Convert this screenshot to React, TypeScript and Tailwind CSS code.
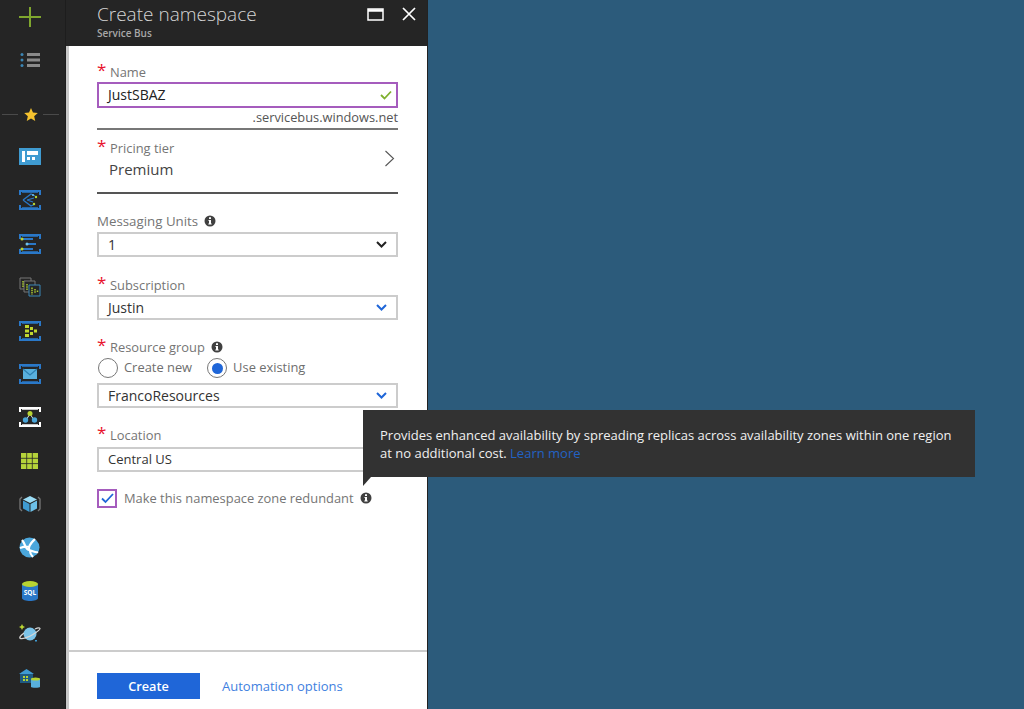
import { ReactNode } from "react"

const font = "font-['Open_Sans','Noto_Sans',sans-serif]"

function Bracket({ color, children }: { color: string; children: ReactNode }) {
  return (
    <svg width="22" height="20" viewBox="0 0 22 20" fill="none">
      <path d="M1 5V1H21V5M1 15V19H21V15" stroke={color} strokeWidth="2" />
      <path d="M3 2H19M3 18H19" stroke={color} strokeWidth="1.5" />
      {children}
    </svg>
  )
}

const railIcons: ReactNode[] = [
  <svg key="dash" width="22" height="17" viewBox="0 0 22 17">
    <rect width="22" height="17" fill="#3f9bd1" />
    <path d="M3 3h3v11H3zM8 3h11v4H8zM8 9h3v3H8zM13 9h3v3h-3z" fill="#fff" />
  </svg>,
  <Bracket key="bus" color="#2a78c8">
    <path d="M4 10 L12 4 L16 6 M4 10 L12 16 L16 14 M8 10 L15 8 M8 10 L14 12" stroke="#2a78c8" strokeWidth="1.300" />
    <circle cx="17" cy="7" r="1.200" fill="#b8d432" />
    <circle cx="15" cy="14" r="1.200" fill="#b8d432" />
    <circle cx="14" cy="5" r="1" fill="#6fc0e8" />
  </Bracket>,
  <Bracket key="lines" color="#2a78c8">
    <path d="M4 5H14M7 10H17M4 15H14" stroke="#2a78c8" strokeWidth="2" />
    <circle cx="3" cy="5" r="1.500" fill="#b8d432" />
    <circle cx="8" cy="10" r="1.500" fill="#6fc0e8" />
    <circle cx="3" cy="15" r="1.500" fill="#b8d432" />
  </Bracket>,
  <svg key="stack" width="22" height="20" viewBox="0 0 22 20" fill="none">
    <path d="M1 1h11v11H1z" stroke="#777" />
    <path d="M5 4h11v11H5z" stroke="#777" fill="#252525" />
    <path d="M10 8h11v11H10z" stroke="#3a87b8" fill="#252525" />
    <path d="M4 4v6M8 7v6M13 10.500v7M16 12v4M18.500 13.500v1.500" stroke="#a8c832" strokeWidth="1.500" strokeDasharray="1.500 .7" />
  </svg>,
  <Bracket key="tree" color="#2a78c8">
    <path d="M6 4h4v3H6zM6 8.500h4v3H6zM6 13h4v3H6zM11 6h3v3h-3zM11 11h3v3h-3zM15 8.500h3v3h-3z" fill="#c2d82e" />
  </Bracket>,
  <Bracket key="mail" color="#2a78c8">
    <path d="M4 5H18V15H4Z" fill="#58b0de" />
    <path d="M4 5L11 11L18 5" stroke="#2d7fb0" strokeWidth="1.200" fill="none" />
  </Bracket>,
  <Bracket key="relay" color="#ffffff">
    <path d="M11 7L7 13M11 7L15 13" stroke="#cfe0e8" strokeWidth="1" />
    <circle cx="11" cy="6.500" r="2.500" fill="#b8d432" />
    <circle cx="6.500" cy="13" r="2.700" fill="#4aa5d8" />
    <circle cx="15.500" cy="13" r="2.700" fill="#4aa5d8" />
  </Bracket>,
  <svg key="table" width="17" height="16" viewBox="0 0 17 16">
    <rect width="17" height="16" fill="#b5d33a" />
    <path d="M5.700 0V16M11.300 0V16M0 5.300H17M0 10.600H17" stroke="#252525" strokeWidth="0.800" />
  </svg>,
  <svg key="cube" width="22" height="18" viewBox="0 0 22 18" fill="none">
    <path d="M3 2L1 4V14L3 16M19 2L21 4V14L19 16" stroke="#777" strokeWidth="1.300" />
    <path d="M11 1L18 4.500L11 8L4 4.500Z" fill="#9bdcf5" />
    <path d="M4 5.500L10.500 9V17L4 13.500Z" fill="#3f9bd1" />
    <path d="M18 5.500L11.500 9V17L18 13.500Z" fill="#6cc0e8" />
  </svg>,
  <svg key="globe" width="21" height="21" viewBox="0 0 21 21" fill="none">
    <circle cx="10.500" cy="10.500" r="10" fill="#4ba7dc" />
    <path d="M3 3C7 8 6 12 10 13C14 14 17 16 19 15M16 2C13 5 9 8 10 13M1 11C4 10 7 9 9 10M11 14C11 16 12 18 14 20" stroke="#fff" strokeWidth="2.200" />
  </svg>,
  <svg key="sql" width="16" height="20" viewBox="0 0 16 20">
    <path d="M0 3V17C0 19 4 20 8 20C12 20 16 19 16 17V3Z" fill="#2a78c8" />
    <ellipse cx="8" cy="3" rx="8" ry="3" fill="#b8d432" />
    <text x="8" y="14" fontSize="6.500" fontWeight="700" fill="#fff" textAnchor="middle" fontFamily="Open Sans">SQL</text>
  </svg>,
  <svg key="cosmos" width="22" height="20" viewBox="0 0 22 20" fill="none">
    <circle cx="11" cy="10" r="6.500" fill="#7cc4ea" />
    <path d="M5 9C1 12 0 14 1.500 14.500C4 15 10 13 14 10.500C18 8 21.500 5.500 21 4.500C20.500 3.500 18 4 16 5" stroke="#d5d5d5" strokeWidth="1.300" />
    <path d="M3 0L4 2L6 3L4 4L3 6L2 4L0 3L2 2Z" fill="#b8d432" />
    <rect x="16" y="16" width="2" height="1.500" fill="#3f9bd1" />
  </svg>,
  <svg key="warehouse" width="21" height="20" viewBox="0 0 21 20">
    <path d="M0 6L7.500 1L15 6Z" fill="#3f9bd1" />
    <path d="M1 6H14V15H1Z" fill="#1f5a80" />
    <path d="M4 8h2v2H4zM7 8h2v2H7zM4 11h2v2H4zM7 11h2v2H7z" fill="#b8d432" />
    <path d="M12 11V19C12 20 21 20 21 19V11Z" fill="#58b0de" />
    <ellipse cx="16.500" cy="11" rx="4.500" ry="1.500" fill="#b8d432" />
  </svg>,
]

function Sidebar() {
  return (
    <aside className="flex w-[65px] shrink-0 flex-col items-center bg-[#252525]">
      <div className="flex h-[34px] w-full items-center justify-center pr-[6px]">
        <svg width="22" height="20" viewBox="0 0 22 20">
          <path d="M10 0h2v20h-2zM0 9h22v2H0z" fill="#7fa62e" />
        </svg>
      </div>
      <div className="flex h-[52px] w-full items-center justify-center pr-[6px]">
        <svg width="20" height="14" viewBox="0 0 20 14">
          <path d="M7 0h13v3H7zM7 5.500h13v3H7zM7 11h13v3H7z" fill="#8a8a8a" />
          <circle cx="2" cy="1.500" r="1.500" fill="#3c86b5" />
          <circle cx="2" cy="7" r="1.500" fill="#3c86b5" />
          <circle cx="2" cy="12.500" r="1.500" fill="#3c86b5" />
        </svg>
      </div>
      <div className="flex h-[49.3px] w-full items-center justify-between pl-[2px] pr-[6px] pt-[7px]">
        <div className="h-px w-[16px] bg-[#4a4a4a]" />
        <svg width="14" height="13" viewBox="0 0 24 23">
          <path d="M12 0l3.500 8 8.500.8-6.400 5.600 1.900 8.400L12 18.400 4.500 22.800l1.900-8.400L0 8.800 8.500 8z" fill="#f5c22e" />
        </svg>
        <div className="h-px w-[16px] bg-[#4a4a4a]" />
      </div>
      {railIcons.map((icon, i) => (
        <div key={i} className="flex h-[43.4px] w-full shrink-0 items-center justify-center pr-[6px]">
          {icon}
        </div>
      ))}
    </aside>
  )
}

function Info({ className = "" }: { className?: string }) {
  return (
    <svg width="12" height="12" viewBox="0 0 12 12" className={className}>
      <circle cx="6" cy="6" r="5.500" fill="#404040" />
      <path d="M5 2.300h2v1.700H5zM4.500 5h2.500v3.500h.7v1H4.300v-1H5V6h-.5z" fill="#fff" />
    </svg>
  )
}

function Label({ children, required = true, info = false, wide = false }: { children: ReactNode; required?: boolean; info?: boolean; wide?: boolean }) {
  return (
    <div className={`flex h-[20px] items-center leading-[20px] text-[#757575] ${wide ? "text-[13.3px]" : "text-[12.9px]"}`}>
      {required && <span className="w-[13px] -translate-y-[3px] text-[17px] leading-none text-[#e8112d]">*</span>}
      <span>{children}</span>
      {info && <Info className="ml-[6px]" />}
    </div>
  )
}

function Select({ value, chevron = "#1f66d8", showChevron = true, small = false }: { value: string; chevron?: string; showChevron?: boolean; small?: boolean }) {
  return (
    <div className={`flex h-[25px] items-center justify-between border-2 border-[#cccccc] bg-white px-[9px] text-[#333333] ${small ? "text-[13px]" : "pb-[1px] text-[14px]"}`}>
      <span>{value}</span>
      {showChevron && (
        <svg width="11" height="7" viewBox="0 0 11 7" fill="none">
          <path d="M1 1l4.500 4.500L10 1" stroke={chevron} strokeWidth="2" />
        </svg>
      )}
    </div>
  )
}

function Radio({ label, checked = false }: { label: string; checked?: boolean }) {
  return (
    <div className="flex items-center gap-[6px]">
      <div className="flex h-[20px] w-[20px] items-center justify-center rounded-full border-[1.5px] border-[#777777]">
        {checked && <div className="h-[11px] w-[11px] rounded-full bg-[#1f66d8]" />}
      </div>
      <span className="text-[12.9px] text-[#6e6e6e]">{label}</span>
    </div>
  )
}

function Panel() {
  return (
    <section className="flex h-full w-[361px] shrink-0 flex-col border-l-[3px] border-[#c8c8c8] bg-white">
      <header className="-ml-[3px] flex h-[46px] shrink-0 items-start justify-between bg-[#252525] pl-[31px] pr-[11px]">
        <div className="text-[#d5d5d5]">
          <div className="mt-[1px] text-[19px] font-light leading-[27px]">Create namespace</div>
          <div className="text-[10px] font-semibold leading-[11px] text-[#a8a8a8]">Service Bus</div>
        </div>
        <div className="mt-[7px] flex items-center gap-[18px]">
          <svg width="17" height="13" viewBox="0 0 17 13" fill="none">
            <path d="M1 1h15v11H1z" stroke="#fff" strokeWidth="1.500" />
            <path d="M1 2.500h15" stroke="#fff" strokeWidth="2.500" />
          </svg>
          <svg width="14" height="14" viewBox="0 0 14 14" fill="none">
            <path d="M1 1l12 12M13 1L1 13" stroke="#fff" strokeWidth="1.700" />
          </svg>
        </div>
      </header>

      <div className="flex-1 pl-[28px] pr-[29px] pt-[16px]">
        <Label>Name</Label>
        <div className="flex h-[26px] items-center justify-between border-2 border-[#a55cbd] pb-[1px] pl-[9px] pr-[4px] text-[14px] text-[#222222]">
          <span>JustSBAZ</span>
          <svg width="12" height="10" viewBox="0 0 12 10" fill="none">
            <path d="M1 5l3.500 3.500L11 1.500" stroke="#7fb02e" strokeWidth="1.800" />
          </svg>
        </div>
        <div className="text-right text-[12.8px] leading-[18px] text-[#555555]">.servicebus.windows.net</div>
        <div className="mt-[2px] h-[2px] bg-[#777777]" />

        <div className="mt-[8px] flex h-[56px] items-start justify-between border-b-2 border-[#555555]">
          <div>
            <Label>Pricing tier</Label>
            <div className="pl-[12px] text-[15px] leading-[22px] text-[#444444]">Premium</div>
          </div>
          <svg width="11" height="17" viewBox="0 0 11 17" fill="none" className="mr-[3px] mt-[12px]">
            <path d="M1.500 1l8 7.500-8 7.500" stroke="#555555" strokeWidth="1.100" />
          </svg>
        </div>

        <div className="mt-[17px]">
          <Label required={false} info wide>Messaging Units</Label>
        </div>
        <div className="mt-[1px]">
          <Select value="1" chevron="#222222" />
        </div>

        <div className="mt-[18px]">
          <Label>Subscription</Label>
        </div>
        <Select value="Justin" />

        <div className="mt-[17px]">
          <Label info>Resource group</Label>
        </div>
        <div className="mt-[1px] flex h-[20px] items-center gap-[15px] pl-[1px]">
          <Radio label="Create new" />
          <Radio label="Use existing" checked />
        </div>
        <div className="mt-[5px]">
          <Select value="FrancoResources" />
        </div>

        <div className="mt-[17px]">
          <Label>Location</Label>
        </div>
        <div className="mt-[2px]">
          <Select value="Central US" showChevron={false} small />
        </div>

        <div className="mt-[16px] flex items-center">
          <div className="flex h-[19px] w-[20px] items-center justify-center border-2 border-[#a55cbd]">
            <svg width="13" height="11" viewBox="0 0 13 11" fill="none">
              <path d="M1 5.500l3.500 3.500L12 1" stroke="#1f66d8" strokeWidth="1.800" />
            </svg>
          </div>
          <span className="ml-[7px] pt-[1px] text-[12.9px] text-[#757575]">Make this namespace zone redundant</span>
          <Info className="ml-[6px]" />
        </div>
      </div>

      <footer className="flex h-[59px] shrink-0 items-start gap-[22px] border-t-2 border-[#cccccc] pl-[28px] pt-[21px]">
        <button type="button" className="h-[26px] w-[103px] bg-[#1f66d8] pt-[1px] text-[12.7px] font-semibold text-white">
          Create
        </button>
        <span className="text-[13px] leading-[26px] text-[#3f7fe0]">Automation options</span>
      </footer>
    </section>
  )
}

export default function App() {
  return (
    <div className={`${font} relative flex h-[709px] w-[1024px] overflow-hidden bg-[#2c5b7b]`}>
      <Sidebar />
      <div className="w-px shrink-0 bg-[#1d1d1d]" />
      <Panel />
      <div className="w-px shrink-0 bg-[#222222]" />

      {/* Tooltip over the panel */}
      <div className="absolute left-[363px] top-[410px] h-[67px] w-[612px] bg-[#323232] pl-[17px] pt-[16px] text-[13px] leading-[18px] text-[#f0f0f0]">
        Provides enhanced availability by spreading replicas across availability zones within one region
        <br />
        at no additional cost. <span className="text-[#2262c4]">Learn more</span>
        <div className="absolute left-0 top-full h-0 w-0 border-r-[8px] border-t-[9px] border-r-transparent border-t-[#323232]" />
      </div>
    </div>
  )
}
